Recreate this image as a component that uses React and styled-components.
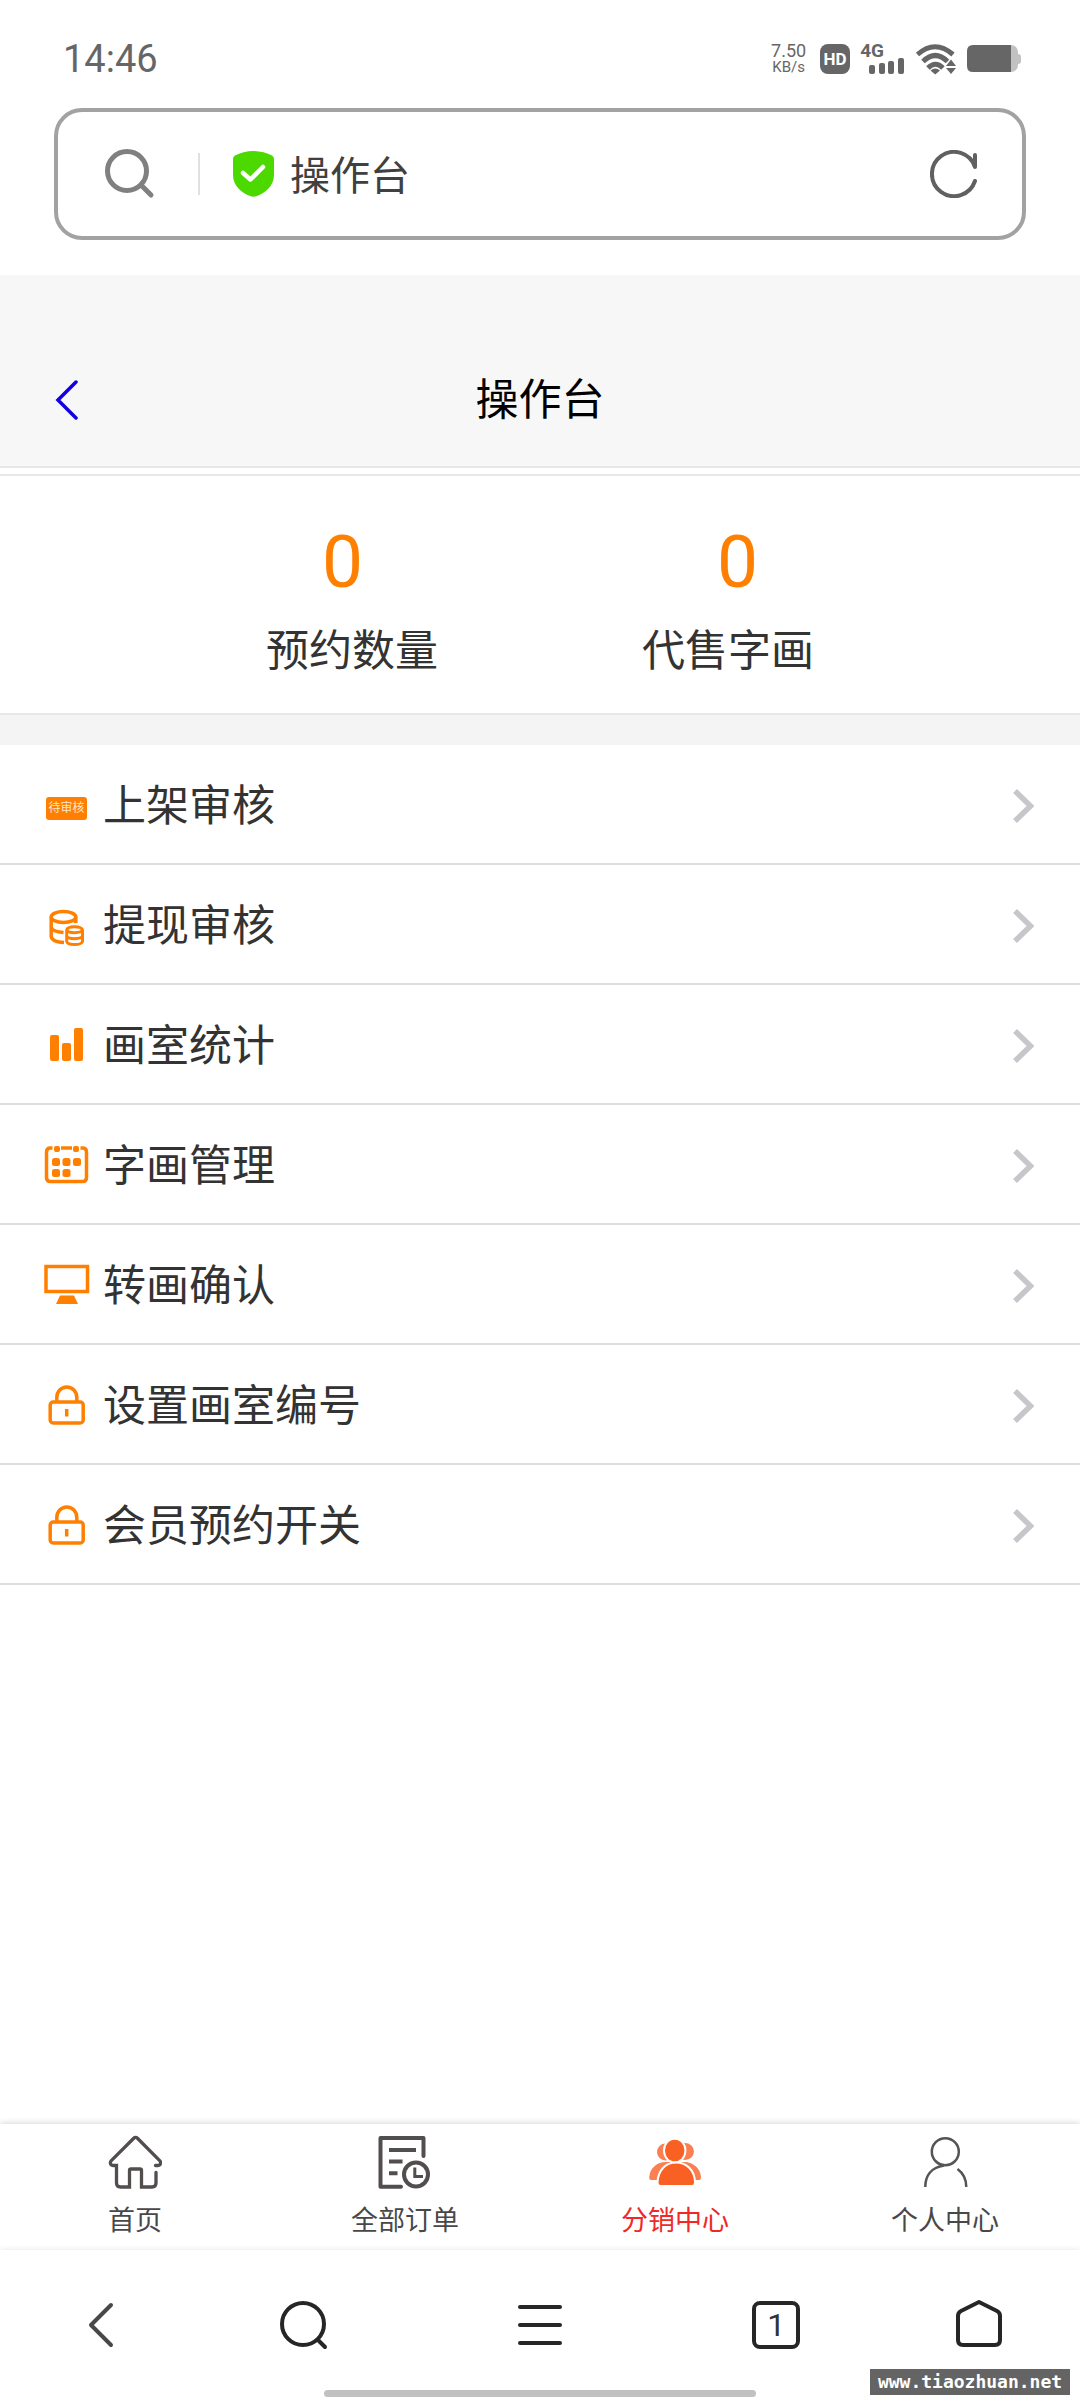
import React from 'react';
import styled, { createGlobalStyle, css } from 'styled-components';

const ORANGE = '#ff8000';

const GlobalStyle = createGlobalStyle`
  *, *::before, *::after {
    box-sizing: border-box;
  }

  body {
    margin: 0;
    background: #fff;
    color: #333;
    font-family: Roboto, "Noto Sans CJK SC", sans-serif;
  }

  button, input {
    margin: 0;
    padding: 0;
    border: 0;
    background: none;
    color: inherit;
    font: inherit;
  }

  a {
    color: inherit;
    text-decoration: none;
  }

  svg {
    display: block;
    flex: none;
  }
`;

// Status bar icons
const SignalBars = () => (
  <svg width="36" height="16" viewBox="0 0 36 16" fill="#666">
    <rect x="0" y="7" width="6" height="9" rx="2" />
    <rect x="10" y="5" width="6" height="11" rx="2" />
    <rect x="19" y="3" width="6" height="13" rx="2" />
    <rect x="29" y="0" width="6" height="16" rx="2" />
  </svg>
);

const WifiIcon = () => (
  <svg width="42" height="32" viewBox="0 0 42 32">
    <g fill="none" stroke="#666" strokeWidth="5">
      <path d="M2.5 11.5Q20-4 38 11.5" />
      <path d="M8 18.5Q20.3 6.5 32.5 18.5" />
      <path d="M13 25Q20.3 17.500 28 25" />
    </g>
    <path fill="#666" d="M15.5 27.5Q20.2 23.5 25 27.5L20.2 31.5Z" />
    <path fill="#666" stroke="#fff" strokeWidth="1.5" paintOrder="stroke" d="M36 16.5L41 23H31ZM31 25H41L36 31Z" />
  </svg>
);

const BatteryIcon = () => (
  <svg width="54" height="28" viewBox="0 0 54 28">
    <rect x="20" width="31" height="27" rx="7" fill="#c2c2c2" />
    <rect x="46" y="9" width="8" height="10" rx="3" fill="#c2c2c2" />
    <path d="M6 0H44V27H6Q0 27 0 21V6Q0 0 6 0Z" fill="#666" />
  </svg>
);

// Address bar icons
const AddressSearchIcon = () => (
  <svg width="52" height="52" viewBox="0 0 52 52" fill="none" stroke="#808080" strokeWidth="5" strokeLinecap="round">
    <circle cx="23" cy="23" r="19.5" />
    <path d="M37 37L47 47" />
  </svg>
);

const ShieldIcon = () => (
  <svg width="41" height="46" viewBox="0 0 41 46">
    <path d="M20.5 0C27 0 34 2 39 4.500Q41 5.500 41 8V24C41 35 32 42 24 45Q20.500 46.500 17 45C9 42 0 35 0 24V8Q0 5.500 2 4.500C7 2 14 0 20.500 0Z" fill="#4cd900" />
    <path d="M10 22L17.500 28.500L30 16" fill="none" stroke="#fff" strokeWidth="4.500" strokeLinecap="round" strokeLinejoin="round" />
  </svg>
);

const ReloadIcon = () => (
  <svg width="48" height="48" viewBox="0 0 48 48" fill="none" stroke="#606060" strokeWidth="4" strokeLinecap="round" strokeLinejoin="round">
    <path d="M45 5V17A22.100 22.100 0 1 0 45 31" />
  </svg>
);

const BackIcon = () => (
  <svg width="24" height="40" viewBox="0 0 24 40" fill="none" stroke="#1200e0" strokeWidth="3.500" strokeLinecap="round">
    <path d="M21 2L3 20L21 38" />
  </svg>
);

const RowArrow = () => (
  <svg width="24" height="36" viewBox="0 0 24 36" fill="none" stroke="#c7c7cb" strokeWidth="5.500">
    <path d="M3 3L18.500 18L3 33" />
  </svg>
);

// Menu icons
const MenuSvg = ({ children }) => (
  <svg width="46" height="46" viewBox="0 0 46 46" fill="none" stroke={ORANGE} strokeWidth="3.500">
    {children}
  </svg>
);

const CoinsIcon = () => (
  <MenuSvg>
    <ellipse cx="19.500" cy="14" rx="12.300" ry="5.500" />
    <path d="M7.200 14V33C7.200 36.500 12 39 20 39.500M31.800 14V20M7.200 24.500C8.500 28 13 29 19.500 29.500" />
    <path d="M22.700 27V38.500C23.500 42.500 37.500 42.500 38.500 38.500V27C37.500 22.500 23.500 22.500 22.700 27C24 30.500 37 30.500 38.500 27M22.700 33C24 36.500 37 36.500 38.500 33" strokeWidth="3" />
  </MenuSvg>
);

const BarsIcon = () => (
  <MenuSvg>
    <g fill={ORANGE} stroke="none">
      <rect x="6" y="12" width="9" height="26" rx="2" />
      <rect x="18" y="20" width="9" height="18" rx="2" />
      <rect x="30" y="5" width="9" height="33" rx="2" />
    </g>
  </MenuSvg>
);

const CalendarIcon = () => (
  <MenuSvg>
    <path d="M8.500 5H6.500Q2.500 5 2.500 9V34.500Q2.500 38.500 6.500 38.500H38.500Q42.500 38.500 42.500 34.500V9Q42.500 5 38.500 5H36.500M17 5H28" />
    <g fill={ORANGE} stroke="none">
      <rect x="10" y="3" width="6" height="6" rx="2" />
      <rect x="29" y="3" width="6" height="6" rx="2" />
      <rect x="8" y="15" width="8" height="8" rx="2.500" />
      <rect x="18.500" y="15" width="8" height="8" rx="2.500" />
      <rect x="29" y="15" width="8" height="8" rx="2.500" />
      <rect x="8" y="26" width="8" height="8" rx="2.500" />
      <rect x="18.500" y="26" width="8" height="8" rx="2.500" />
    </g>
  </MenuSvg>
);

const MonitorIcon = () => (
  <MenuSvg>
    <rect x="2" y="3.500" width="41.500" height="25" />
    <path d="M16 32.500H30L34 41H12Z" fill={ORANGE} stroke="none" />
  </MenuSvg>
);

const LockIcon = () => (
  <MenuSvg>
    <rect x="6.200" y="19" width="33" height="21" rx="3" />
    <path d="M12.800 19V14.500A10 10.500 0 0 1 32.800 14.500V19M22.700 26V33.500" />
  </MenuSvg>
);

// Tab icons
const HomeIcon = () => (
  <svg width="54" height="54" viewBox="-1 0 54 54" fill="none" stroke="#524e4e" strokeWidth="3.300" strokeLinecap="round">
    <path d="M46.500 30.500H48.500C51.500 30.500 52.500 27.500 50.700 25.700L28.200 3A2.200 2.200 0 0 0 25 3L2.300 25.700C.5 27.500 1.500 30.500 4.500 30.500H7.500V48C7.500 50.500 9 52 11.500 52H20.500V35.500C20.500 34.500 21 34 22 34H31C32 34 32.500 34.500 32.500 35.500V52H43C45.500 52 47 50.500 47 48V37.500" />
  </svg>
);

const OrdersIcon = () => (
  <svg width="54" height="54" viewBox="1 0 54 54" fill="none" stroke="#524e4e" strokeWidth="4">
    <path d="M46.500 21V3H3.500V51.700H24" strokeWidth="4" strokeLinecap="round" strokeLinejoin="round" />
    <path d="M12 15H39M12 26.500H25.500M12 38.300H20.500" />
    <circle cx="39" cy="39.500" r="12" />
    <path d="M37.800 32.500V41.500H46" strokeWidth="3" />
  </svg>
);

const GroupIcon = () => (
  <svg width="54" height="54" viewBox="0 0 54 54" fill="#fa8052">
    <ellipse cx="17.500" cy="17" rx="8.500" ry="8.500" />
    <ellipse cx="37" cy="16.500" rx="9" ry="8.500" />
    <path d="M3 45Q1 45 1.300 42C2 33 9 27 18 27H36C46 27 52.500 34 53 42Q53 45 51 45Z" />
    <g fill="#f96023" stroke="#fff" strokeWidth="4" paintOrder="stroke">
      <path d="M12.500 50Q10.500 50 10.500 47.500C11 36 18 28.500 28 28.500S46 36 46 47.500Q46 50 44 50Z" />
      <ellipse cx="26.700" cy="15.500" rx="9.700" ry="10.800" />
    </g>
  </svg>
);

const PersonIcon = () => (
  <svg width="54" height="54" viewBox="0 0 54 54" fill="none" stroke="#555" strokeWidth="2.500">
    <circle cx="27.300" cy="16.700" r="13.500" />
    <path d="M7.300 52C7.300 41 13 32.500 26 30.500M39.500 34C45 38 48.300 44 48.300 52" />
  </svg>
);

// Browser toolbar icons
const ToolSvg = ({ children }) => (
  <svg width="50" height="50" viewBox="0 0 50 50" fill="none" stroke="#262626" strokeWidth="4" strokeLinecap="round" strokeLinejoin="round">
    {children}
  </svg>
);

const menu = [
  { label: '上架审核', tag: '待审核' },
  { label: '提现审核', Icon: CoinsIcon },
  { label: '画室统计', Icon: BarsIcon },
  { label: '字画管理', Icon: CalendarIcon },
  { label: '转画确认', Icon: MonitorIcon },
  { label: '设置画室编号', Icon: LockIcon },
  { label: '会员预约开关', Icon: LockIcon },
];

const tabs = [
  { label: '首页', Icon: HomeIcon },
  { label: '全部订单', Icon: OrdersIcon },
  { label: '分销中心', Icon: GroupIcon, active: true },
  { label: '个人中心', Icon: PersonIcon },
];

const App = () => (
  <Page>
    <GlobalStyle />

    <StatusBar>
      <Clock>14:46</Clock>
      <StatusIcons>
        <NetSpeed>
          <SpeedValue>7.50</SpeedValue>
          <SpeedUnit>KB/s</SpeedUnit>
        </NetSpeed>
        <HdBadge>HD</HdBadge>
        <Signal>
          <SignalType>4G</SignalType>
          <SignalBars />
        </Signal>
        <WifiIcon />
        <BatteryIcon />
      </StatusIcons>
    </StatusBar>

    <AddressBar>
      <IconButton aria-label="搜索"><AddressSearchIcon /></IconButton>
      <AddressDivider />
      <ShieldIcon />
      <AddressInput aria-label="地址" defaultValue="操作台" />
      <IconButton aria-label="刷新"><ReloadIcon /></IconButton>
    </AddressBar>

    <Header>
      <BackLink href="#back" aria-label="返回"><BackIcon /></BackLink>
      <Title>操作台</Title>
    </Header>

    <Main>
      <Stats>
        <StatNumbers>
          <StatNumber>0</StatNumber>
          <StatNumber>0</StatNumber>
        </StatNumbers>
        <StatLabels>
          <span>预约数量</span>
          <span>代售字画</span>
        </StatLabels>
      </Stats>

      <MenuList>
        {menu.map(({ label, tag, Icon }) => (
          <li key={label}>
            <MenuLink href="#menu">
              <MenuIcon>{tag ? <Tag>{tag}</Tag> : <Icon />}</MenuIcon>
              <MenuLabel>{label}</MenuLabel>
              <RowArrow />
            </MenuLink>
          </li>
        ))}
      </MenuList>
    </Main>

    <TabBar>
      {tabs.map(({ label, Icon, active }) => (
        <Tab key={label} href="#tab" $active={active}>
          <Icon />
          <span>{label}</span>
        </Tab>
      ))}
    </TabBar>

    <Toolbar>
      <IconButton aria-label="后退">
        <ToolSvg><path d="M35 5L15 25L35 45" stroke="#484848" /></ToolSvg>
      </IconButton>
      <IconButton aria-label="搜索">
        <ToolSvg>
          <circle cx="24" cy="24" r="21" />
          <path d="M39 40L46 47" />
        </ToolSvg>
      </IconButton>
      <IconButton aria-label="菜单">
        <ToolSvg><path d="M5 7H45M5 25H45M5 43H45" /></ToolSvg>
      </IconButton>
      <IconButton aria-label="标签页">
        <TabCount>1</TabCount>
      </IconButton>
      <IconButton aria-label="主页">
        <ToolSvg><path d="M25 2L43 11Q46 12.500 46 16V40Q46 45 41 45H9Q4 45 4 40V16Q4 12.500 7 11Z" /></ToolSvg>
      </IconButton>
      <HomeIndicator />
      <Watermark>www.tiaozhuan.net</Watermark>
    </Toolbar>
  </Page>
);

export default App;

const Page = styled.div`
  display: flex;
  flex-direction: column;
  min-height: 100vh;
`;

const StatusBar = styled.div`
  display: flex;
  align-items: center;
  justify-content: space-between;
  height: 108px;
  padding: 10px 59px 0 63px;
  color: #666;
`;

const Clock = styled.span`
  font-size: 38px;
  line-height: 48px;
`;

const StatusIcons = styled.div`
  display: flex;
  align-items: center;
  gap: 10px;
`;

const NetSpeed = styled.div`
  display: flex;
  flex-direction: column;
  align-items: center;
  margin-right: 4px;
  line-height: 17px;
`;

const SpeedValue = styled.span`
  font-size: 18px;
`;

const SpeedUnit = styled.span`
  font-size: 15px;
`;

const HdBadge = styled.span`
  width: 30px;
  border-radius: 8px;
  background: #666;
  color: #fff;
  font-size: 17px;
  font-weight: 700;
  line-height: 30px;
  text-align: center;
`;

const Signal = styled.div`
  display: flex;
  flex-direction: column;
  align-items: flex-end;
`;

const SignalType = styled.span`
  align-self: flex-start;
  padding-right: 21px;
  font-size: 19px;
  font-weight: 700;
  line-height: 14px;
`;

const AddressBar = styled.div`
  display: flex;
  align-items: center;
  height: 132px;
  margin: 0 54px 35px;
  padding: 0 44px 0 46px;
  border: 4px solid #a2a2a2;
  border-radius: 28px;
`;

const IconButton = styled.button`
  display: flex;
  align-items: center;
  justify-content: center;
  cursor: pointer;
`;

const AddressDivider = styled.span`
  width: 2px;
  height: 42px;
  margin: 0 33px 0 42px;
  background: #e0e0e0;
`;

const AddressInput = styled.input`
  flex: 1;
  min-width: 0;
  margin: 0 16px;
  padding-top: 5px;
  color: #404040;
  font-size: 40px;
  line-height: 60px;
  outline: none;
`;

const Header = styled.header`
  display: grid;
  grid-template-columns: 1fr auto 1fr;
  align-items: center;
  padding: 59px 55px 0;
  border-bottom: 2px solid #e8e8e8;
  background: #f7f7f7;
`;

const BackLink = styled.a`
  justify-self: start;
`;

const Title = styled.h1`
  margin: 0;
  color: #000;
  font-size: 43px;
  font-weight: 400;
  line-height: 132px;
`;

const Main = styled.main`
  flex: 1;
  padding-top: 6px;
`;

const Stats = styled.section`
  padding: 46px 0 32px;
  border: solid #e8e8e8;
  border-width: 2px 0;
`;

const statRow = css`
  display: flex;
  justify-content: center;
`;

const StatNumbers = styled.div`
  ${statRow}
  gap: 354px;
  margin-bottom: 19px;
`;

const StatNumber = styled.span`
  color: ${ORANGE};
  font-size: 73px;
  line-height: 80px;
`;

const StatLabels = styled.div`
  ${statRow}
  gap: 204px;
  font-size: 43px;
  line-height: 60px;
`;

const MenuList = styled.ul`
  margin: 0;
  padding: 0;
  border-top: 30px solid #f4f4f4;
  list-style: none;
`;

const MenuLink = styled.a`
  display: flex;
  align-items: center;
  height: 120px;
  padding: 3px 44px 0;
  border-bottom: 2px solid #dedede;
`;

const MenuIcon = styled.span`
  display: flex;
  justify-content: center;
  width: 45px;
`;

const Tag = styled.span`
  width: 41px;
  margin-top: 5px;
  border-radius: 3px;
  background: ${ORANGE};
  color: #ffe6cc;
  font-size: 12px;
  line-height: 23px;
  text-align: center;
`;

const MenuLabel = styled.span`
  flex: 1;
  margin-left: 14px;
  font-size: 43px;
  line-height: 60px;
`;

const TabBar = styled.nav`
  display: grid;
  grid-template-columns: repeat(4, 1fr);
  height: 126px;
  background: #fff;
  box-shadow: 0 -1px 6px rgba(0, 0, 0, 0.16);
`;

const Tab = styled.a`
  display: flex;
  flex-direction: column;
  align-items: center;
  gap: 17px;
  padding-top: 11px;
  color: ${({ $active }) => ($active ? '#f02828' : '#484848')};
  font-size: 27px;
  line-height: 30px;
`;

const Toolbar = styled.nav`
  position: relative;
  display: grid;
  grid-template-columns: 3fr 3fr 4fr 3fr 3fr;
  height: 150px;
  background: #fff;
  box-shadow: 0 -1px 5px rgba(0, 0, 0, 0.08);
`;

const TabCount = styled.span`
  width: 48px;
  border: 4px solid #262626;
  border-radius: 8px;
  font-size: 32px;
  line-height: 40px;
  text-align: center;
`;

const HomeIndicator = styled.span`
  position: absolute;
  bottom: 3px;
  left: 30%;
  width: 40%;
  height: 7px;
  border-radius: 4px;
  background: #c1c1c1;
`;

const Watermark = styled.span`
  position: absolute;
  right: 10px;
  bottom: 5px;
  width: 200px;
  background: #646464;
  color: #fff;
  font-family: "DejaVu Sans Mono", monospace;
  font-size: 18px;
  font-weight: 700;
  line-height: 26px;
  text-align: center;
`;
